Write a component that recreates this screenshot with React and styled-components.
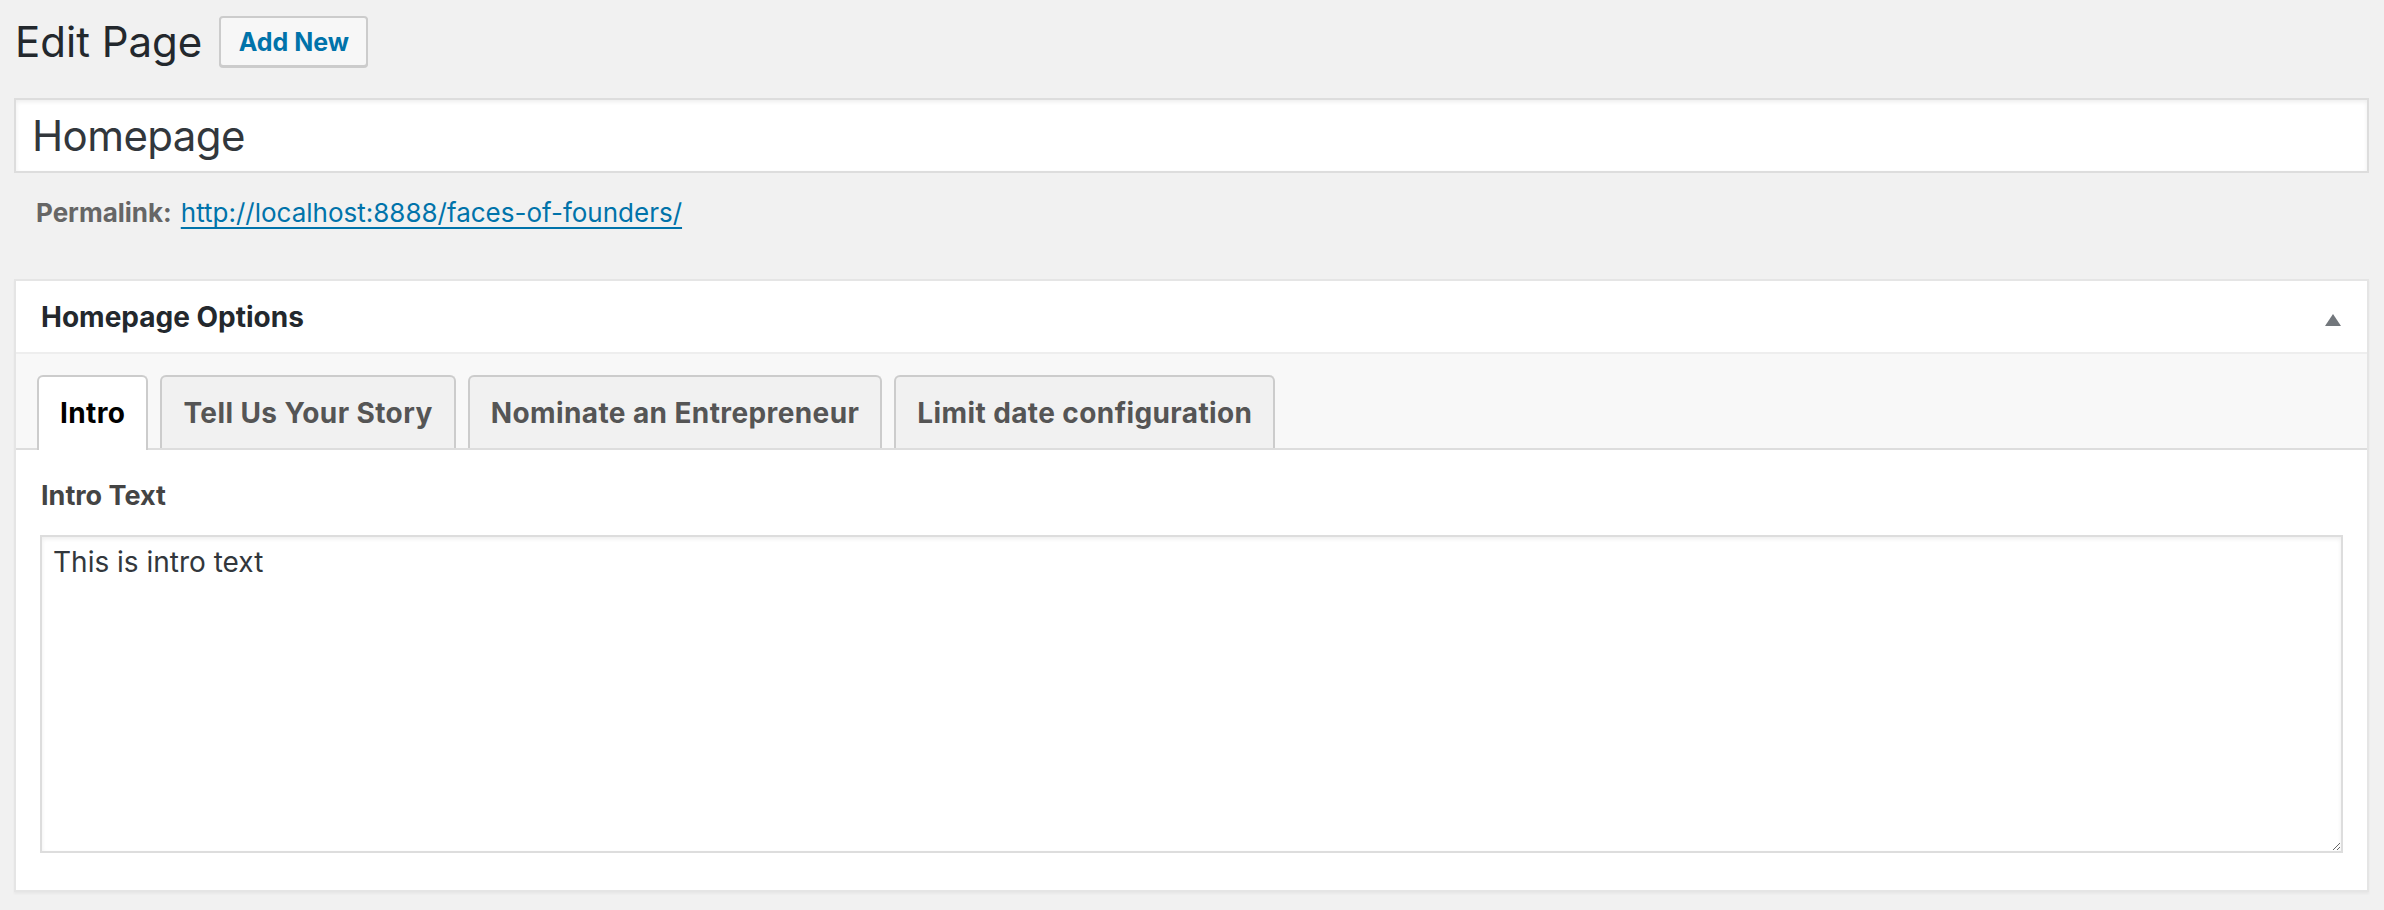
import React from "react";
import styled, { createGlobalStyle } from "styled-components";

const GlobalStyle = createGlobalStyle`
  html, body {
    margin: 0;
    padding: 0;
    background: #f1f1f1;
  }
  body {
    font-family: Inter, "Noto Sans", "Liberation Sans", sans-serif;
    color: #444;
  }
`;

const tabs = ["Intro", "Tell Us Your Story", "Nominate an Entrepreneur", "Limit date configuration"];

const App = () => {
  return (
    <>
      <GlobalStyle />
      <Wrap>
        <HeaderRow>
          <PageTitle>Edit Page</PageTitle>
          <AddButton>Add New</AddButton>
        </HeaderRow>
        <TitleInput defaultValue="Homepage" />
        <Permalink>
          <PermaLabel>Permalink:</PermaLabel>
          <PermaLink href="#">http://localhost:8888/faces-of-founders/</PermaLink>
        </Permalink>
        <Panel>
          <PanelHeader>
            <PanelTitle>Homepage Options</PanelTitle>
            <Toggle width="16" height="12" viewBox="0 0 16 12">
              <polygon points="8,0 16,12 0,12" fill="#72777c" />
            </Toggle>
          </PanelHeader>
          <TabBar>
            {tabs.map((t, i) => (
              <Tab key={t} active={i === 0}>
                {t}
              </Tab>
            ))}
          </TabBar>
          <TabBody>
            <FieldLabel>Intro Text</FieldLabel>
            <TextArea defaultValue="This is intro text" />
          </TabBody>
        </Panel>
      </Wrap>
    </>
  );
};

export default App;

const Wrap = styled.div`
  padding: 16px 15px 18px 14px;
`;

const HeaderRow = styled.div`
  display: flex;
  align-items: center;
  gap: 17px;
  padding-left: 1px;
`;

const PageTitle = styled.h1`
  margin: 0;
  font-size: 42px;
  font-weight: 400;
  color: #23282d;
`;

const AddButton = styled.button`
  height: 51px;
  width: 149px;
  box-sizing: border-box;
  border: 2px solid #ccc;
  border-radius: 4px;
  background: #f7f7f7;
  color: #0073aa;
  font-family: inherit;
  font-size: 25px;
  font-weight: 700;
  padding: 0;
  cursor: pointer;
  box-shadow: 0 1px 0 #ccc;
`;

const TitleInput = styled.input`
  display: block;
  box-sizing: border-box;
  width: 100%;
  height: 75px;
  margin-top: 31px;
  border: 2px solid #ddd;
  background: #fff;
  box-shadow: inset 0 2px 4px rgba(0, 0, 0, 0.07);
  padding: 0 16px;
  font-family: inherit;
  font-size: 42px;
  letter-spacing: -0.6px;
  color: #32373c;
  outline: none;
`;

const Permalink = styled.div`
  display: flex;
  gap: 9px;
  align-items: baseline;
  padding: 22px 0 0 22px;
  font-size: 26px;
  line-height: 36px;
`;

const PermaLabel = styled.span`
  font-weight: 700;
  color: #666;
`;

const PermaLink = styled.a`
  color: #0073aa;
  text-decoration: underline;
  text-underline-offset: 5px;
  text-decoration-thickness: 2px;
`;

const Panel = styled.div`
  margin-top: 48px;
  background: #fff;
  border: 2px solid #e5e5e5;
  box-shadow: 0 2px 2px rgba(0, 0, 0, 0.04);
`;

const PanelHeader = styled.div`
  height: 71px;
  display: flex;
  align-items: center;
  justify-content: space-between;
  padding: 0 26px 0 25px;
  border-bottom: 2px solid #eee;
`;

const PanelTitle = styled.h2`
  margin: 0;
  font-size: 28px;
  font-weight: 700;
  color: #23282d;
`;

const Toggle = styled.svg`
  display: block;
  margin-top: 7px;
`;

const TabBar = styled.div`
  display: flex;
  align-items: flex-start;
  gap: 12px;
  padding: 21px 21px 0;
  background: #f8f8f8;
  border-bottom: 2px solid #ddd;
`;

const Tab = styled.div`
  box-sizing: border-box;
  height: ${(p) => (p.active ? "75px" : "73px")};
  margin-bottom: ${(p) => (p.active ? "-2px" : "0")};
  display: flex;
  align-items: center;
  padding: ${(p) => (p.active ? "0 21px 2px" : "0 21px")};
  border: 2px solid #ccc;
  border-bottom: none;
  border-radius: 6px 6px 0 0;
  background: ${(p) => (p.active ? "#fff" : "#f1f1f1")};
  color: ${(p) => (p.active ? "#000" : "#555")};
  font-size: 28px;
  font-weight: 700;
  letter-spacing: 0.4px;
  cursor: pointer;
`;

const TabBody = styled.div`
  padding: 28px 24px 37px;
`;

const FieldLabel = styled.div`
  font-size: 27px;
  font-weight: 700;
  color: #444;
  line-height: 36px;
  padding-left: 1px;
`;

const TextArea = styled.textarea`
  display: block;
  box-sizing: border-box;
  width: 100%;
  height: 318px;
  margin-top: 21px;
  border: 2px solid #ddd;
  box-shadow: inset 0 2px 4px rgba(0, 0, 0, 0.07);
  padding: 6px 11px;
  font-family: inherit;
  font-size: 28px;
  line-height: 1.4;
  color: #32373c;
  resize: vertical;
  outline: none;
`;
